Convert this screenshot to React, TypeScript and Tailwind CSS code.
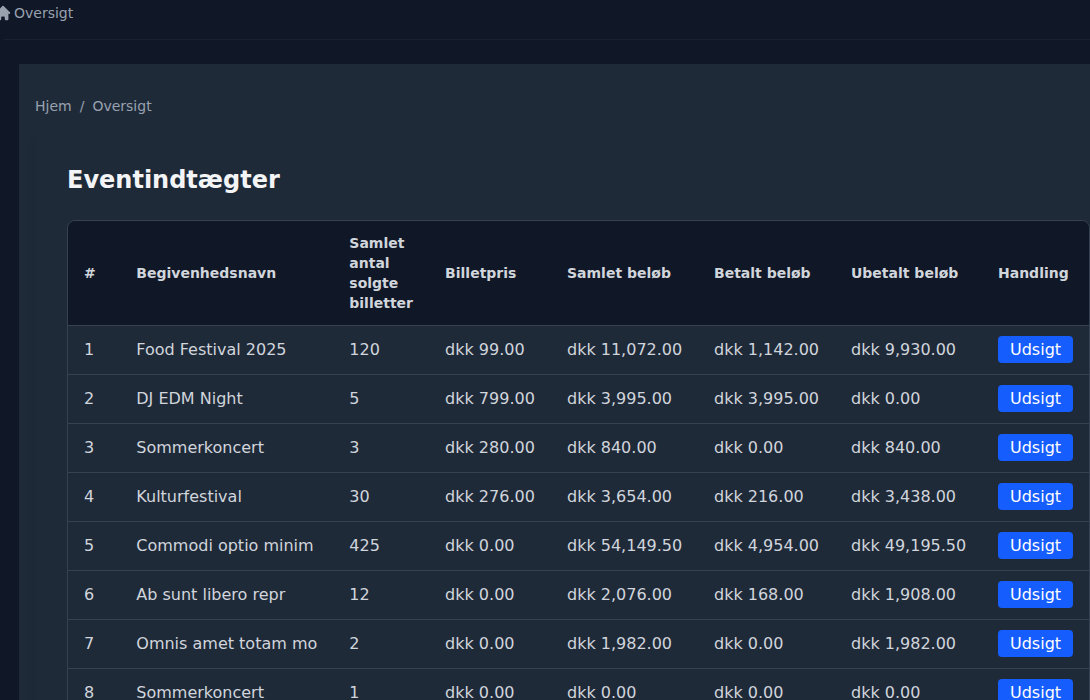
import { HiHome } from "react-icons/hi";

const headers = [
  "#",
  "Begivenhedsnavn",
  "Samlet antal solgte billetter",
  "Billetpris",
  "Samlet beløb",
  "Betalt beløb",
  "Ubetalt beløb",
  "Handling",
];

const rows = [
  ["1", "Food Festival 2025", "120", "dkk 99.00", "dkk 11,072.00", "dkk 1,142.00", "dkk 9,930.00"],
  ["2", "DJ EDM Night", "5", "dkk 799.00", "dkk 3,995.00", "dkk 3,995.00", "dkk 0.00"],
  ["3", "Sommerkoncert", "3", "dkk 280.00", "dkk 840.00", "dkk 0.00", "dkk 840.00"],
  ["4", "Kulturfestival", "30", "dkk 276.00", "dkk 3,654.00", "dkk 216.00", "dkk 3,438.00"],
  ["5", "Commodi optio minim", "425", "dkk 0.00", "dkk 54,149.50", "dkk 4,954.00", "dkk 49,195.50"],
  ["6", "Ab sunt libero repr", "12", "dkk 0.00", "dkk 2,076.00", "dkk 168.00", "dkk 1,908.00"],
  ["7", "Omnis amet totam mo", "2", "dkk 0.00", "dkk 1,982.00", "dkk 0.00", "dkk 1,982.00"],
  ["8", "Sommerkoncert", "1", "dkk 0.00", "dkk 0.00", "dkk 0.00", "dkk 0.00"],
];

export default function App() {
  return (
    <div className="flex h-[700px] w-[1090px] flex-col overflow-hidden bg-[#101726] font-['DejaVu_Sans',sans-serif] text-gray-300">
      <header className="ml-1 h-10 shrink-0 border-b border-[#1a2231] pt-[3px]">
        <div className="-ml-[10px] flex items-center gap-0.5 text-sm text-gray-400">
          <HiHome className="size-[18px]" />
          <span>Oversigt</span>
        </div>
      </header>
      <main className="mt-6 ml-[19px] w-[1120px] flex-1 bg-[#1f2a39] p-4">
        <nav className="mt-4 flex gap-2 text-sm text-gray-400">
          <span>Hjem</span>
          <span>/</span>
          <span>Oversigt</span>
        </nav>
        <section className="mt-4 h-[900px] w-[1088px] rounded-lg bg-[#1f2a39] px-8 pt-8 shadow-lg">
          <h1 className="text-2xl font-bold text-gray-100">Eventindtægter</h1>
          <div className="mt-6 w-[1023px] overflow-hidden rounded-lg border border-[#364151]">
            <table className="w-[1021px] table-fixed border-collapse text-left">
              <colgroup>
                <col className="w-[52.3px]" />
                <col className="w-[213px]" />
                <col className="w-[95.8px]" />
                <col className="w-[121.9px]" />
                <col className="w-[147px]" />
                <col className="w-[137px]" />
                <col className="w-[147px]" />
                <col className="w-[107px]" />
              </colgroup>
              <thead className="bg-[#101726] text-sm">
                <tr className="h-[104px]">
                  {headers.map((h) => (
                    <th key={h} className="px-4 py-3 font-semibold">{h}</th>
                  ))}
                </tr>
              </thead>
              <tbody>
                {rows.map((row) => (
                  <tr key={row[0]} className="h-[49px] border-t border-[#364151]">
                    {row.map((cell, i) => (
                      <td key={i} className="px-4 py-3 whitespace-nowrap">{cell}</td>
                    ))}
                    <td className="px-4 py-3 whitespace-nowrap">
                      <a className="rounded bg-[#155dfc] px-3 py-1 text-white">Udsigt</a>
                    </td>
                  </tr>
                ))}
              </tbody>
            </table>
          </div>
        </section>
      </main>
    </div>
  );
}
